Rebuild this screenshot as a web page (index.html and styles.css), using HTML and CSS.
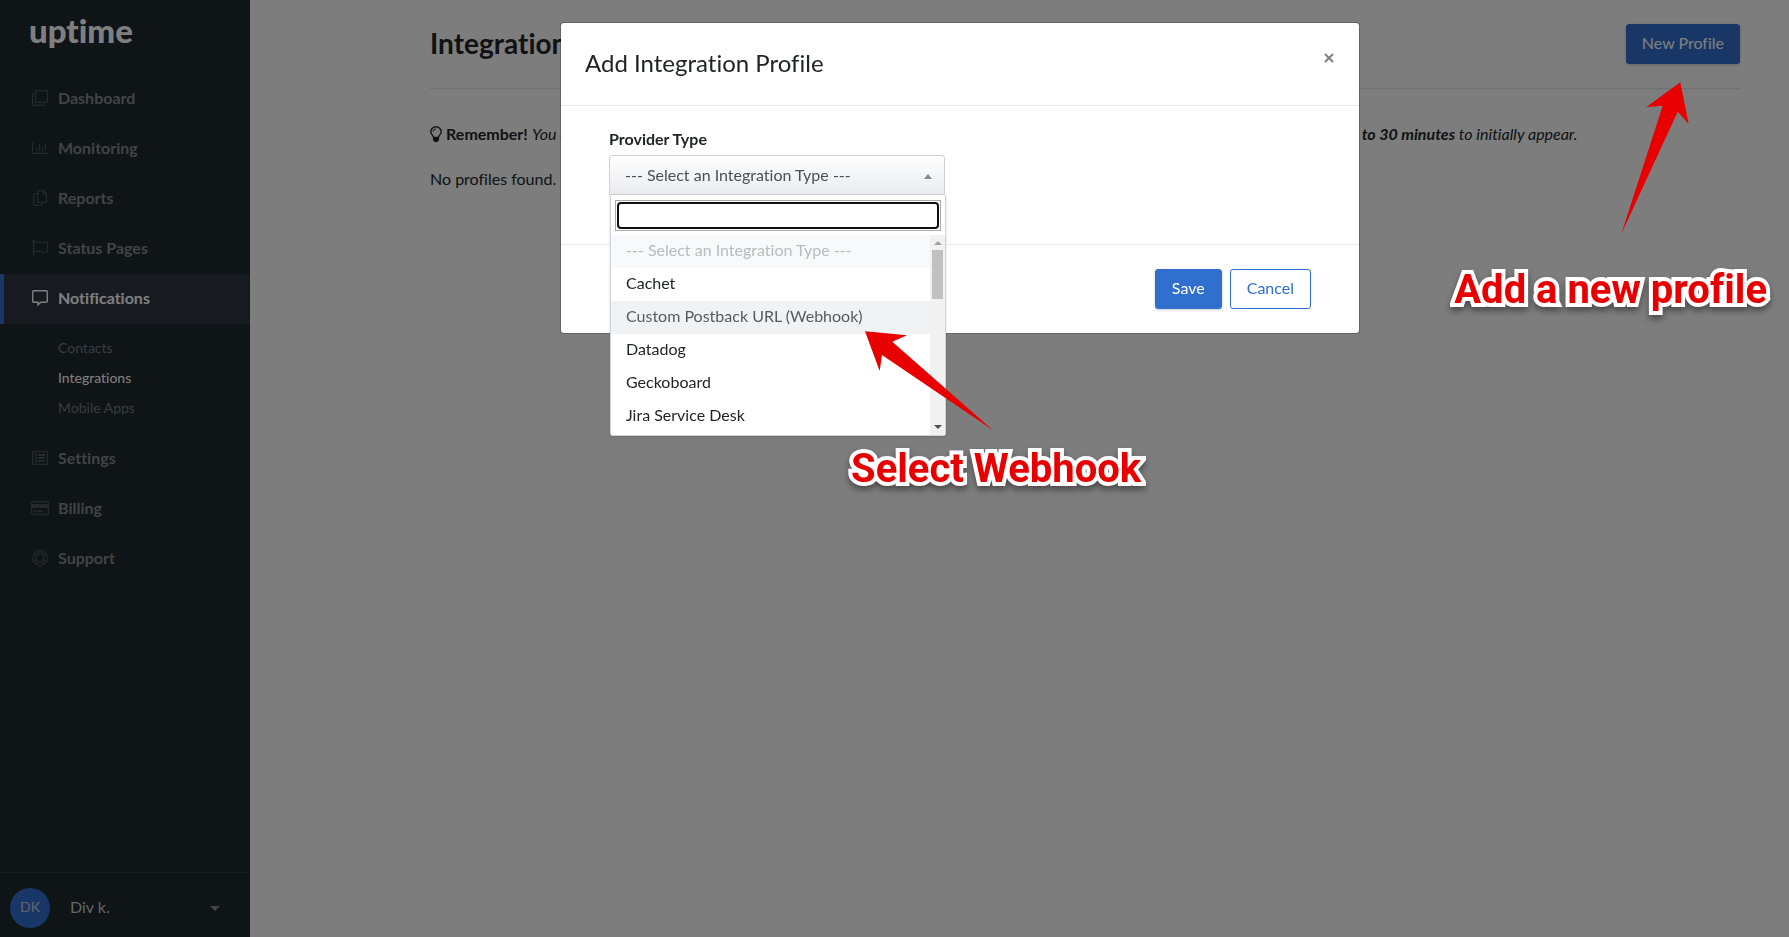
FILE: index.html
```html
<!DOCTYPE html>
<html lang="en">
<head>
<meta charset="utf-8">
<meta name="viewport" content="width=device-width, initial-scale=1">
<title>Integrations - Uptime</title>
<link rel="stylesheet" href="styles.css">
</head>
<body>
<div class="app">
  <aside class="sidebar">
    <a class="logo" href="#">uptime</a>
    <nav class="nav">
      <a class="nav-item" href="#">
        <svg class="icon" viewBox="0 0 16 16"><rect x="3.6" y=".6" width="11.8" height="11.8" rx="1.2"/><path d="M3.5 3.6H1.8A1.2 1.2 0 0 0 .6 4.800V14.200a1.200 1.200 0 0 0 1.200 1.200H11.200a1.200 1.200 0 0 0 1.200-1.200V12.500"/></svg>
        Dashboard</a>
      <a class="nav-item" href="#">
        <svg class="icon" viewBox="0 0 16 16"><path d="M.6 2v11.400H16M4.500 11V8M7.500 11V4M10.500 11V6M13.500 11V3"/></svg>
        Monitoring</a>
      <a class="nav-item" href="#">
        <svg class="icon" viewBox="0 0 16 16"><path d="M6.800.600H11.500L14.400 3.500V11.400a1 1 0 0 1-1 1H6.800a1 1 0 0 1-1-1V1.600a1 1 0 0 1 1-1ZM11 .800V4h3.200M5.600 3.600H2.600a1 1 0 0 0-1 1v9.800a1 1 0 0 0 1 1H9.200a1 1 0 0 0 1-1V12.600"/></svg>
        Reports</a>
      <a class="nav-item" href="#">
        <svg class="icon" viewBox="0 0 16 16"><path d="M1.500 1V16M1.600 3C4 1.500 6 1.600 8.500 2.500S13 3 15.400 2V11.500C13 12.600 11 12.600 8.500 11.700S4 11 1.600 12.500"/><circle cx="1.400" cy="1.200" r=".7"/></svg>
        Status Pages</a>
      <a class="nav-item nav-item-active" href="#">
        <svg class="icon" viewBox="0 0 16 16"><path d="M1.800.700H14.200a1.100 1.100 0 0 1 1.100 1.100V11.200a1.100 1.100 0 0 1-1.100 1.100H8.700L6 15V12.300H1.800A1.100 1.100 0 0 1 .700 11.200V1.800A1.100 1.100 0 0 1 1.800.700Z"/></svg>
        Notifications</a>
      <div class="subnav">
        <a class="subnav-item" href="#">Contacts</a>
        <a class="subnav-item subnav-item-active" href="#">Integrations</a>
        <a class="subnav-item" href="#">Mobile Apps</a>
      </div>
      <a class="nav-item" href="#">
        <svg class="icon" viewBox="0 0 16 16"><rect x=".6" y="1.600" width="14.800" height="12.800" rx="1"/><path d="M3 5h2M6 5h7M3 8h2M6 8h7M3 11h2M6 11h7" stroke-width="1.800"/></svg>
        Settings</a>
      <a class="nav-item" href="#">
        <svg class="icon icon-wide" viewBox="0 0 18 16"><rect x=".6" y="1.600" width="16.800" height="12.800" rx="1"/><path d="M.600 6H17.400" stroke-width="4"/><path d="M3 11.300h3M7 11.300h5" stroke-width="1.800"/></svg>
        Billing</a>
      <a class="nav-item" href="#">
        <svg class="icon" viewBox="0 0 16 16"><circle cx="8" cy="8" r="7.300"/><circle cx="8" cy="8" r="3.800"/><path d="M4.300 1.800 6.400 4.600M1.800 4.300 4.600 6.400M11.700 1.800 9.600 4.600M14.200 4.300 11.400 6.400M4.300 14.200 6.400 11.400M1.800 11.700 4.600 9.600M11.700 14.200 9.600 11.400M14.200 11.700 11.400 9.600"/></svg>
        Support</a>
    </nav>
    <button class="account" type="button">
      <span class="avatar">DK</span>
      <span class="account-name">Div k.</span>
      <svg class="account-caret" viewBox="0 0 10 5"><path d="M0 0H10L5 5Z"/></svg>
    </button>
  </aside>

  <main class="content">
    <header class="page-header">
      <h1 class="page-title">Integrations</h1>
      <button class="btn btn-primary" type="button">New Profile</button>
    </header>
    <p class="notice">
      <svg class="bulb" viewBox="0 0 12 16"><path d="M3.500 11.500C3.500 9.500.800 8.500.800 5.700a5.200 5 0 0 1 10.400 0C11.200 8.500 8.500 9.500 8.500 11.500Z"/><path d="M3.200 5.600A2.700 2.700 0 0 1 6 3" stroke-width="1"/><path class="bulb-base" d="M3 11.500H9V14L7.500 16H4.500L3 14Z"/></svg>
      <b>Remember!</b> <i>You must assign each integration profile to a contact before it can receive any alerts. Metrics sent to the provider may take <b>up to 30 minutes</b> to initially appear.</i>
    </p>
    <p class="empty">No profiles found.</p>
  </main>
</div>

<div class="overlay">
  <section class="modal" role="dialog" aria-modal="true" aria-labelledby="modal-title">
    <header class="modal-header">
      <h2 class="modal-title" id="modal-title">Add Integration Profile</h2>
      <button class="close" type="button" aria-label="Close"><svg viewBox="0 0 10 10"><path d="M1 1 9 9M9 1 1 9"/></svg></button>
    </header>
    <div class="modal-body">
      <label class="field-label" for="provider">Provider Type</label>
      <div class="picker">
        <select class="picker-select" id="provider"><option>--- Select an Integration Type ---</option></select>
        <svg class="picker-caret" viewBox="0 0 8 5"><path d="M0 5H8L4 0Z"/></svg>
        <div class="dropdown">
          <div class="search-wrap"><div class="search-frame"><input class="search" type="text" aria-label="Search integration types"></div></div>
          <div class="options-row">
            <ul class="options" role="listbox" aria-label="Integration types">
              <li class="option option-disabled" role="option">--- Select an Integration Type ---</li>
              <li class="option" role="option">Cachet</li>
              <li class="option option-hover" role="option">Custom Postback URL (Webhook)</li>
              <li class="option" role="option">Datadog</li>
              <li class="option" role="option">Geckoboard</li>
              <li class="option" role="option">Jira Service Desk</li>
            </ul>
            <div class="scrollbar">
              <svg class="scroll-up" viewBox="0 0 8 4"><path d="M0 4H8L4 0Z"/></svg>
              <div class="scroll-thumb"></div>
              <svg class="scroll-down" viewBox="0 0 8 4"><path d="M0 0H8L4 4Z"/></svg>
            </div>
          </div>
        </div>
      </div>
    </div>
    <footer class="modal-footer">
      <button class="btn btn-primary" type="button">Save</button>
      <button class="btn btn-outline" type="button">Cancel</button>
    </footer>
  </section>
</div>

<svg class="arrow arrow-select" viewBox="0 0 128 100"><path d="M0 .3 42 4.300 27.300 10.700 128 99.300 17 24 14.700 40Z"/></svg>
<svg class="arrow arrow-profile" viewBox="0 0 68 152"><path d="M59.300.300 67.700 42 56.700 29.700.300 152 41.700 23.700 25 25.300Z"/></svg>
<p class="callout callout-select">Select Webhook</p>
<p class="callout callout-profile">Add a new profile</p>
</body>
</html>
```
FILE: styles.css
```css
* { box-sizing: border-box; }

body {
  margin: 0;
  font-family: Lato, "Open Sans", sans-serif;
  font-size: 16px;
  line-height: 24px;
  font-variant-ligatures: none;
  color: #212529;
  background: #fafafa;
}

a { color: inherit; text-decoration: none; }
button, input, select { font: inherit; }
h1, h2, p, ul { margin: 0; padding: 0; }

.app { display: flex; min-height: 100vh; }

/* Sidebar */
.sidebar {
  width: 250px;
  flex: none;
  display: flex;
  flex-direction: column;
  background: #1e282e;
  color: #85878a;
}
.logo {
  padding: 10px 29px 24px;
  font-size: 33px;
  line-height: 40px;
  font-weight: 900;
  color: #fff;
}
.nav { flex: 1; }
.nav-item {
  display: flex;
  align-items: center;
  gap: 10px;
  height: 50px;
  padding: 0 0 2px 32px;
  font-weight: 700;
}
.icon {
  width: 16px;
  height: 16px;
  flex: none;
  fill: none;
  stroke: #4b5257;
  stroke-width: 1.2;
}
.icon-wide { width: 18px; margin: 0 -1px; }
.nav-item-active {
  padding-left: 28px;
  border-left: 4px solid #306fce;
  background: #2e3541;
  color: #fff;
}
.nav-item-active .icon { stroke: #fff; stroke-width: 1.4; }
.subnav { padding: 9px 0 11px 58px; }
.subnav-item {
  display: block;
  font-size: 14px;
  line-height: 30px;
  color: #74787c;
}
.subnav-item-active { color: #fff; }
.account {
  display: flex;
  align-items: center;
  padding: 15px 30px 9px 10px;
  border: 0;
  border-top: 1px solid #343c42;
  background: none;
  color: #c8cacc;
  text-align: left;
}
.avatar {
  width: 40px;
  height: 40px;
  border-radius: 50%;
  background: #306fce;
  font-size: 14px;
  line-height: 38px;
  text-align: center;
}
.account-name { flex: 1; padding: 0 0 2px 20px; }
.account-caret { width: 10px; height: 5px; fill: #84878a; }

/* Page content */
.content { flex: 1; padding: 24px 49px 0 180px; }
.page-header {
  display: flex;
  align-items: flex-start;
  justify-content: space-between;
  padding-bottom: 24px;
  border-bottom: 1px solid #dee0e2;
}
.page-title { font-size: 28px; line-height: 38px; font-weight: 700; }
.notice { padding: 33px 0 21px; white-space: nowrap; }
.bulb {
  width: 12px;
  height: 16px;
  vertical-align: -2px;
  fill: none;
  stroke: #212529;
  stroke-width: 1.4;
}
.bulb-base { fill: #212529; stroke: none; }

.btn {
  height: 40px;
  padding: 0 15px 2px;
  border: 1px solid #306fce;
  border-radius: 3px;
  line-height: 24px;
}
.btn-primary { background: #306fce; color: #fff; box-shadow: 0 1px 3px rgba(0, 0, 0, .2); }
.btn-outline { background: #fff; color: #306fce; }

/* Modal */
.overlay {
  position: fixed;
  inset: 0;
  display: flex;
  justify-content: center;
  align-items: flex-start;
  padding: 22px 0 0 131px;
  background: rgba(0, 0, 0, .5);
}
.modal {
  width: 800px;
  border: 1px solid rgba(0, 0, 0, .2);
  border-radius: 4px;
  background: #fff;
  background-clip: padding-box;
}
.modal-header {
  display: flex;
  justify-content: space-between;
  align-items: flex-start;
  padding: 24px 25px 26px 24px;
  border-bottom: 1px solid #e9ecef;
}
.modal-title { font-size: 24px; line-height: 32px; font-weight: 400; }
.close { padding: 5px 0 0; border: 0; background: none; line-height: 10px; }
.close svg { width: 10px; height: 10px; fill: none; stroke: #7c7f82; stroke-width: 2; }
.modal-body { padding: 21px 48px 49px; }
.field-label { display: block; padding-bottom: 4px; font-weight: 700; }
.picker { position: relative; width: 336px; }
.picker-select {
  appearance: none;
  display: block;
  width: 100%;
  height: 40px;
  padding: 0 15px;
  border: 1px solid #cdd2da;
  border-radius: 3px 3px 0 0;
  background: linear-gradient(#fff, #e9ecef);
  color: #495057;
}
.picker-caret { position: absolute; right: 13px; top: 19px; width: 8px; height: 5px; fill: #888; }
.dropdown {
  position: absolute;
  top: 40px;
  left: 1px;
  width: 100%;
  border: 1px solid #ced4da;
  border-top: 0;
  border-radius: 0 0 3px 3px;
  background: #fff;
  box-shadow: 0 1px 3px rgba(0, 0, 0, .15);
}
.search-wrap { padding: 5px 4px 4px; }
.search-frame { padding: 1px; border: 1px solid #aaa; }
.search {
  display: block;
  width: 100%;
  height: 27px;
  padding: 0 6px;
  border: 2px solid #101010;
  border-radius: 4px;
  background: #fff;
  outline: none;
}
.options-row { display: flex; }
.options { flex: 1; list-style: none; padding-bottom: 2px; }
.option { height: 33px; padding: 0 15px; line-height: 30px; }
.option-disabled { background: #f8f9fa; color: #b9bcbf; }
.option-hover { background: #f1f2f4; color: #565b61; }
.scrollbar {
  width: 15px;
  display: flex;
  flex-direction: column;
  align-items: center;
  padding: 6px 0;
  background: #f1f1f1;
}
.scroll-up { width: 8px; height: 4px; fill: #a3a3a3; }
.scroll-thumb { width: 11px; height: 49px; margin: 5px 0 auto; background: #c1c1c1; }
.scroll-down { width: 8px; height: 4px; fill: #505050; }
.modal-footer {
  display: flex;
  justify-content: flex-end;
  gap: 8px;
  padding: 24px 48px;
  border-top: 1px solid #e9ecef;
}
.modal-footer .btn { padding: 0 16px 2px; }

/* Tutorial annotations floating above the page */
.arrow { position: absolute; fill: #e80000; }
.arrow-select { left: 865px; top: 331px; width: 128px; height: 100px; }
.arrow-profile { right: 100px; top: 82px; width: 68px; height: 152px; }
.callout {
  position: absolute;
  font-family: Roboto, sans-serif;
  font-size: 40px;
  line-height: 48px;
  font-weight: 700;
  color: #e80000;
  white-space: nowrap;
  -webkit-text-stroke: 8px #fff;
  paint-order: stroke fill;
  filter: drop-shadow(0 4px 3px rgba(0, 0, 0, .4));
}
.callout-select { left: 851px; top: 445px; }
.callout-profile { right: 22px; top: 266px; }
```
